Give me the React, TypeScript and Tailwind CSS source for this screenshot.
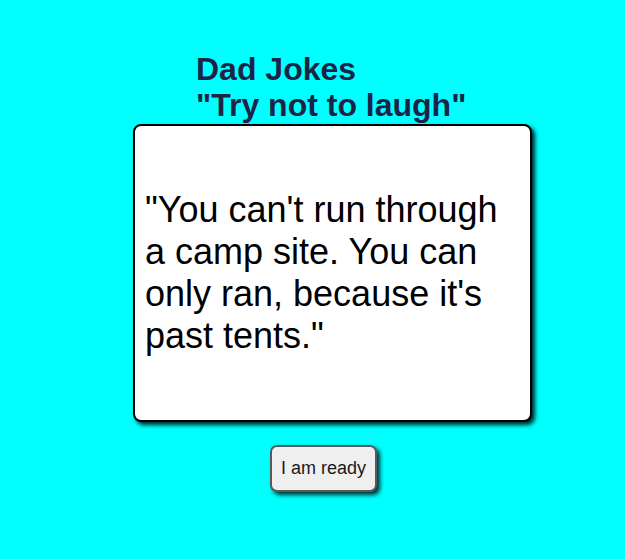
export default function App() {
  return (
    <div className="min-h-[559px] w-full bg-[#00ffff] pt-[51px] font-['Liberation_Sans',Arial,sans-serif]">
      {/* Title */}
      <h1 className="ml-[196px] text-[32px] leading-[36px] font-bold text-[#1b2446]">
        Dad Jokes
        <br />
        "Try not to laugh"
      </h1>

      {/* Joke card */}
      <div className="ml-[133px] mt-[1px] flex h-[298px] w-[399px] items-center rounded-[8px] border-2 border-black bg-white px-[10px] shadow-[3px_3px_4px_rgba(0,0,0,0.85)]">
        <p className="text-[36px] leading-[42px] text-black">
          "You can't run through a camp site. You can only ran, because it's past tents."
        </p>
      </div>

      {/* Button */}
      <button className="ml-[270px] mt-[23px] h-[47px] w-[107px] rounded-[7px] border-2 border-[#5a5a5a] bg-[#efefef] text-[18px] text-[#1a1a1a] shadow-[3px_3px_4px_rgba(0,0,0,0.8)]">
        I am ready
      </button>
    </div>
  );
}
